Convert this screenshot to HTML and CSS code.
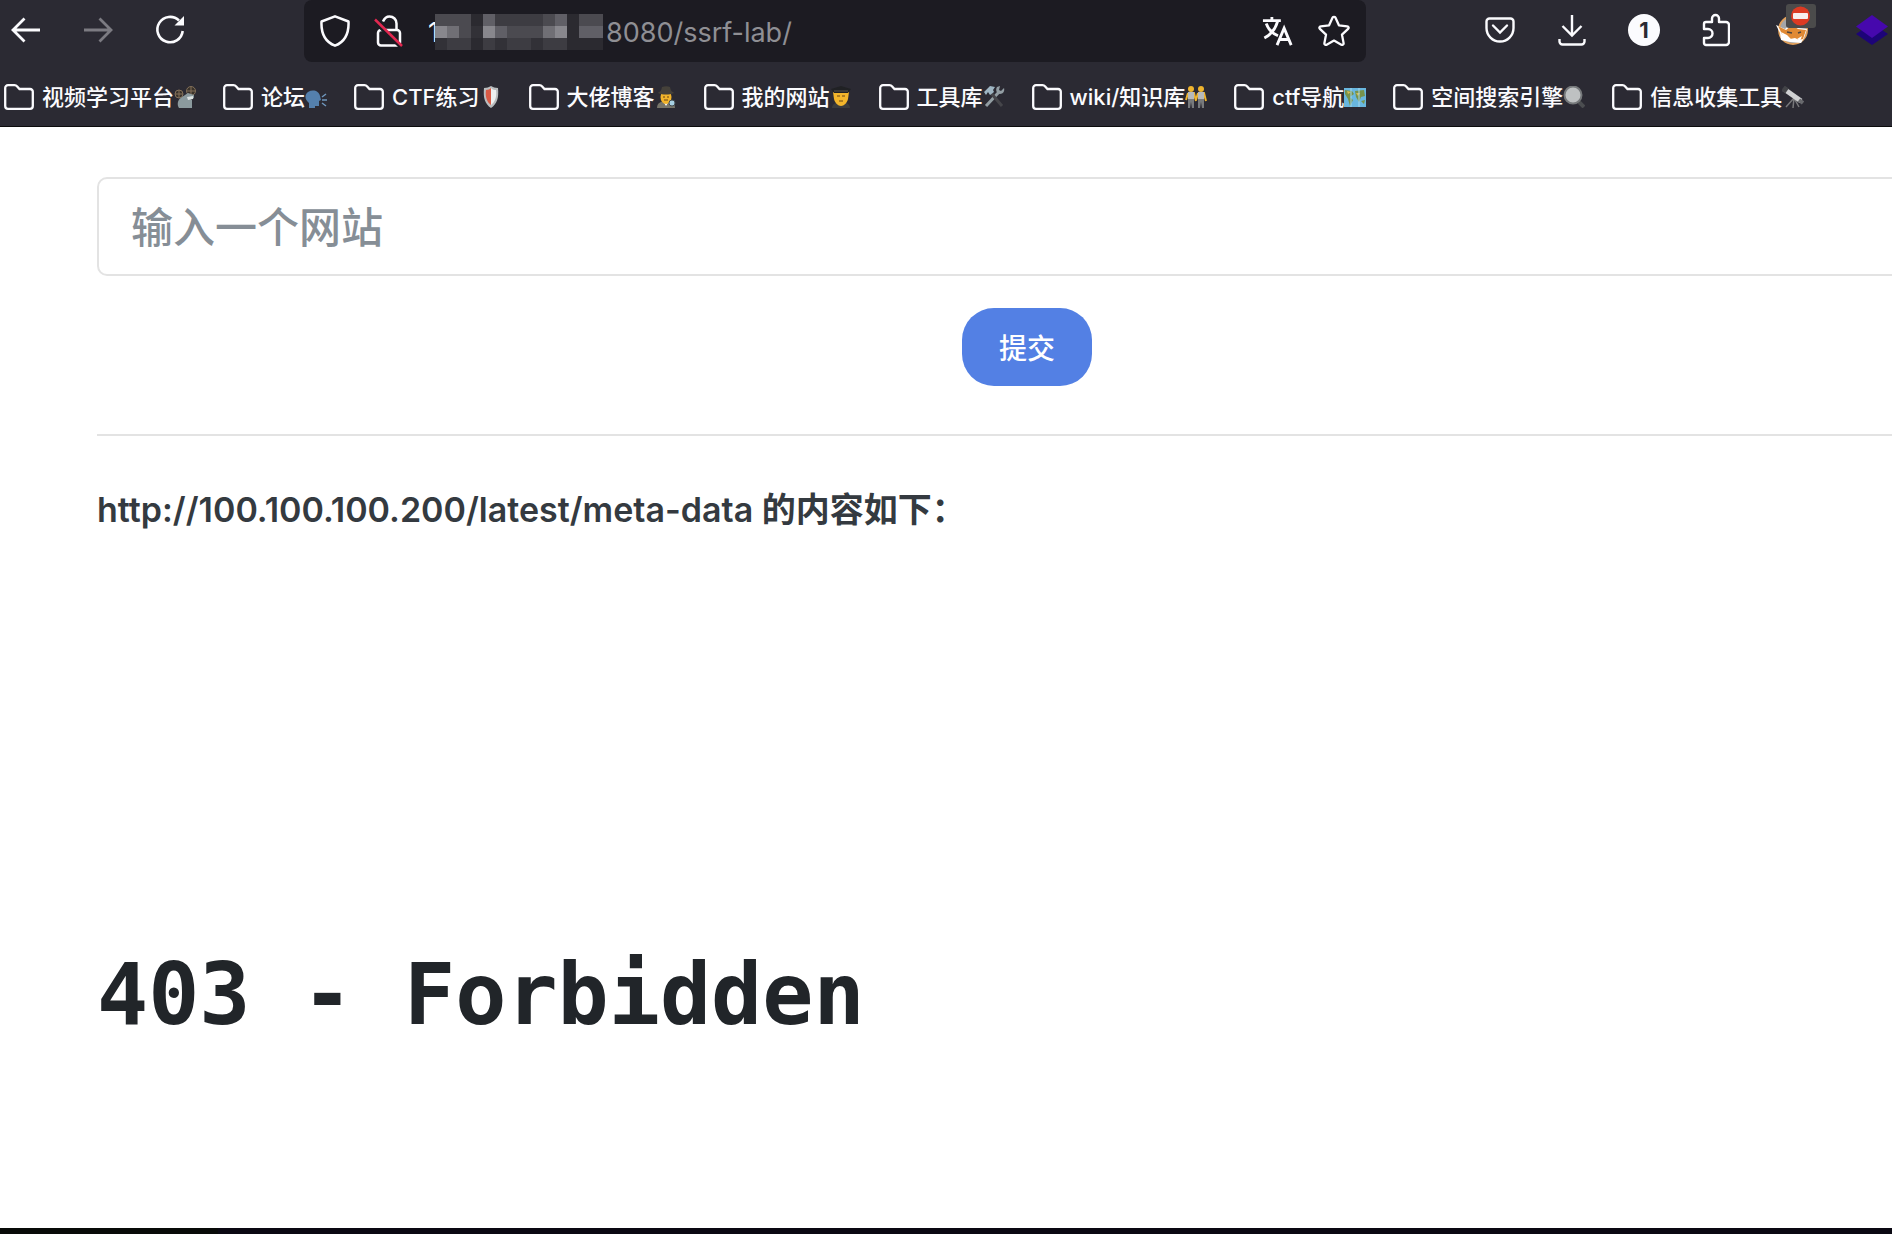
FILE: index.html
```html
<!DOCTYPE html>
<html lang="zh-CN">

<head>
    <meta charset="UTF-8">
    <meta name="viewport" content="width=device-width, initial-scale=1.0">
    <title>ssrf-lab</title>
    <link rel="stylesheet" href="styles.css">
</head>

<body>
    <svg width="0" height="0" class="defs" aria-hidden="true">
        <symbol id="folder" viewBox="0 0 30 26">
            <path d="M4 1.200h6.500c1.200 0 2 .4 2.700 1.200L15.500 5H26a2.800 2.800 0 0 1 2.800 3v14a2.800 2.800 0 0 1-2.800 2.800H4A2.800 2.800 0 0 1 1.200 22V4A2.800 2.800 0 0 1 4 1.200z" fill="none" stroke="#fbfbfe" stroke-width="2.300" />
        </symbol>
    </svg>

    <header>
        <nav class="toolbar">
            <div class="nav-buttons">
                <button aria-label="后退">
                    <svg width="32" height="32" viewBox="0 0 32 32"><path d="M30 16H3M14.500 4.500 3 16l11.500 11.500" fill="none" stroke="#fbfbfe" stroke-width="2.800" /></svg>
                </button>
                <button aria-label="前进">
                    <svg width="32" height="32" viewBox="0 0 32 32"><path d="M2 16h27M17.500 4.500 29 16 17.500 27.500" fill="none" stroke="#7c7b82" stroke-width="2.800" /></svg>
                </button>
                <button aria-label="刷新">
                    <svg width="32" height="32" viewBox="0 0 32 32"><path d="M28.700 17A12.700 12.700 0 1 1 25 6.500" fill="none" stroke="#fbfbfe" stroke-width="2.600" /><path d="M30 2v9.500h-9.500z" fill="#fbfbfe" /></svg>
                </button>
            </div>

            <div class="url-bar">
                <svg width="30" height="32" viewBox="0 0 30 32"><path d="M15 1.300 28.500 6.500C29 17 26 26.500 15 30.700 4 26.500 1 17 1.500 6.500z" fill="none" stroke="#fbfbfe" stroke-width="2.500" stroke-linejoin="round" /></svg>
                <svg width="30" height="32" viewBox="0 0 30 32">
                    <rect x="4" y="15" width="22" height="15.500" rx="3" fill="none" stroke="#fbfbfe" stroke-width="2.500" />
                    <path d="M9 6.500C10.500 3 12.500 1.500 15.500 1.500c4 0 7 3 7 7V15" fill="none" stroke="#fbfbfe" stroke-width="2.500" />
                    <path d="M.5 6.500 27 32" stroke="#1c1b22" stroke-width="4" />
                    <path d="M1 4.500 28 31" stroke="#e22850" stroke-width="2.500" />
                </svg>
                <div class="address">
                    <span class="host">1</span>
                    <svg class="mosaic" width="168" height="36" viewBox="0 0 14 3" preserveAspectRatio="none" shape-rendering="crispEdges">
                        <path fill="#3d3c42" d="M0 0h14v3H0z" />
                        <path fill="#4b4a50" d="M0 0h3v1H0zM2 1h1v1H2zM6 1h3v1H6zM9 0h1v1H9zM12 0h2v1h-2z" />
                        <path fill="#88878d" d="M0 1h1v1H0zM4 1h1v1H4zM10 1h1v1h-1z" />
                        <path fill="#706f75" d="M1 1h1v1H1zM9 1h1v1H9z" />
                        <path fill="#605f66" d="M4 0h1v1H4zM10 0h1v1h-1zM5 1h1v1H5zM12 1h2v1h-2z" />
                        <path fill="#2b2a30" d="M3 0h1v1H3zM11 0h1v3h-1zM12 2h2v1h-2zM3 2h1v1H3z" />
                        <path fill="#323137" d="M0 2h1v1H0zM3 1h1v1H3zM5 2h1v1H5zM8 2h1v1H8z" />
                    </svg>
                    <span class="path">8080/ssrf-lab/</span>
                </div>
                <svg width="32" height="32" viewBox="0 0 34 32">
                    <path d="M1 5h19M10.500 1v4M4.500 8C7 15 12 19 17 21M16.500 6C14 15 9 20 2.500 23.500" fill="none" stroke="#fbfbfe" stroke-width="3" />
                    <path d="m16 31 7.500-18L31 31M18.500 25h10" fill="none" stroke="#fbfbfe" stroke-width="3" />
                </svg>
                <svg width="32" height="32" viewBox="0 0 32 32"><path d="M14.600 2.600c.5-1.100 2.300-1.100 2.800 0l3.500 7.700 8.300 1c1.400.2 1.900 1.700.9 2.600l-6.100 5.800 1.600 8.400c.2 1.300-1.100 2.200-2.300 1.600L16 25.600l-7.300 4.100c-1.200.6-2.500-.3-2.300-1.600L8 19.700l-6.100-5.800c-1-.9-.5-2.400.9-2.600l8.300-1z" fill="none" stroke="#fbfbfe" stroke-width="2.300" stroke-linejoin="round" /></svg>
            </div>

            <div class="nav-buttons">
                <button aria-label="Pocket">
                    <svg width="30" height="28" viewBox="0 0 30 28"><path d="M4.500 2.500h21a3 3 0 0 1 3 3V12a13.500 13.500 0 0 1-27 0V5.500a3 3 0 0 1 3-3z" fill="none" stroke="#fbfbfe" stroke-width="2.400" /><path d="m8 9.500 7 7 7-7" fill="none" stroke="#fbfbfe" stroke-width="2.400" stroke-linecap="round" /></svg>
                </button>
                <button aria-label="下载">
                    <svg width="28" height="32" viewBox="0 0 28 32"><path d="M14 1v20M4.500 12l9.500 9.500 9.500-9.500M1.500 25v2.500a3 3 0 0 0 3 3h19a3 3 0 0 0 3-3V25" fill="none" stroke="#fbfbfe" stroke-width="2.400" /></svg>
                </button>
                <button aria-label="通知"><span class="count">1</span></button>
                <button aria-label="扩展">
                    <svg width="28" height="34" viewBox="0 0 28 34"><path d="M2 14v-3a2 2 0 0 1 2-2h6V5.500a3.500 3.500 0 0 1 7 0V9h7a3 3 0 0 1 3 3v17a3 3 0 0 1-3 3H4a2 2 0 0 1-2-2v-5h4a4.500 4.500 0 0 0 0-9H2z" fill="none" stroke="#fbfbfe" stroke-width="2.400" stroke-linejoin="round" /></svg>
                </button>
                <button class="proxy" aria-label="代理">
                    <svg width="32" height="32" viewBox="0 0 32 32">
                        <circle cx="17" cy="16" r="14" fill="#a3a5a8" stroke="#e0a05c" stroke-width="2" />
                        <path d="m0 11 9 4 6-5 7 4 9 1-3 9-3 5-11-1-9-2-1-7z" fill="#fff" />
                        <path d="m2 12 8 4 6-5 6 4 8 1-3 9-4 1-4-2-5 1-8-5z" fill="#e08a35" />
                        <path d="m5 18 6 3 6 6-8-2zM21 25l5-3-2 5z" fill="#fff" />
                        <path d="m11 18 5 1M22 19l3-1" stroke="#4a4440" stroke-width="1.500" />
                    </svg>
                    <svg class="badge" width="30" height="24" viewBox="0 0 30 24">
                        <rect width="30" height="24" rx="3" fill="#4b4b4b" />
                        <circle cx="14.500" cy="12" r="9.500" fill="#dc3a23" />
                        <rect x="7" y="9" width="15" height="6" rx="1" fill="#f7eeee" />
                    </svg>
                </button>
                <button class="last" aria-label="Wappalyzer">
                    <svg width="32" height="30" viewBox="0 0 32 30"><path d="m0 19 16-11 16 11-16 11z" fill="#1d0478" /><path d="M0 11.500 16 0l16 11.500L16 23z" fill="#4608ad" /></svg>
                </button>
            </div>
        </nav>

        <nav class="bookmarks">
            <a href="#">
                <svg width="30" height="26"><use href="#folder" /></svg>
                <span>视频学习平台</span>
                <svg class="emoji" viewBox="0 0 22 22">
                    <circle cx="5" cy="8" r="4" fill="#3a332b" stroke="#84715a" /><circle cx="17" cy="5" r="4.500" fill="#3a332b" stroke="#84715a" />
                    <path d="M1 8h8M5 4v8M13 5h8M17 1v8" stroke="#84715a" />
                    <path d="M14 7 8 11c-5 3-5 8-3 11h13v-8h-2l4-2v-3z" fill="#8b9a9e" /><path d="M13 11l6-1v3l-5 1z" fill="#dce2e2" />
                </svg>
            </a>
            <a href="#">
                <svg width="30" height="26"><use href="#folder" /></svg>
                <span>论坛</span>
                <svg class="emoji" viewBox="0 0 22 22">
                    <path d="M4 22v-5C0 14-1 9 3 6c5-3 11-1 12 4l1 4-2 1v5h-4v2z" fill="#5480ad" />
                    <path d="m17 11 4-3M17 14h5M17 17l4 3" stroke="#6f97bd" stroke-width="1.500" />
                </svg>
            </a>
            <a href="#">
                <svg width="30" height="26"><use href="#folder" /></svg>
                <span>CTF练习</span>
                <svg class="emoji" viewBox="0 0 22 22">
                    <path d="M4 2c3 0 5-1 7-2 2 1 4 2 7 2 1 10-1 16-7 20C5 18 3 12 4 2z" fill="#b9bcbe" />
                    <path d="M6 4c2 0 4-1 5-2v17C7 16 5 11 6 4z" fill="#d95a45" /><path d="M11 2c2 2 3 2 5 2 1 7-1 12-5 15z" fill="#eef0f0" />
                </svg>
            </a>
            <a href="#">
                <svg width="30" height="26"><use href="#folder" /></svg>
                <span>大佬博客</span>
                <svg class="emoji" viewBox="0 0 22 22">
                    <path d="M2 22c0-5 4-7 9-7s9 2 9 7z" fill="#77756a" /><path d="m8 15 3 5 3-5z" fill="#fff" />
                    <ellipse cx="11" cy="11" rx="5.500" ry="7" fill="#f3b52b" />
                    <path d="M8 11h2M12 11h2M9 14h4" stroke="#684517" /><path d="M3 7c2-2 3-1 4-6 3-1 6-1 8 0 1 5 2 4 4 6-5 2-11 2-16 0z" fill="#45413a" />
                    <circle cx="17" cy="17" r="3" fill="#a7d0e4" stroke="#454d52" />
                </svg>
            </a>
            <a href="#">
                <svg width="30" height="26"><use href="#folder" /></svg>
                <span>我的网站</span>
                <svg class="emoji" viewBox="0 0 22 22">
                    <path d="M2 22c0-4 4-6 9-6s9 2 9 6z" fill="#3b3c3e" />
                    <path d="M3 6h16l-1 7c-1 4-4 7-7 7s-6-3-7-7z" fill="#f3b52b" /><path d="M7 10h3M12 10h3M9 15h4" stroke="#684517" />
                    <path d="m1 3 10-3 10 3-3 4H4z" fill="#202124" /><path d="M4 5h14" stroke="#58554b" />
                </svg>
            </a>
            <a href="#">
                <svg width="30" height="26"><use href="#folder" /></svg>
                <span>工具库</span>
                <svg class="emoji" viewBox="0 0 22 22">
                    <path d="m3 20 13-14" stroke="#929da3" stroke-width="3" /><path d="M14 1c-2 3 0 7 3 7s5-3 4-6l-3 3-2-1 1-4z" fill="#929da3" />
                    <path d="m8 7 11 13" stroke="#45454a" stroke-width="3" /><path d="M1 6 7 0l5 1-2 3 1 2-4 3-2-3-2 3z" fill="#9eb5c3" />
                </svg>
            </a>
            <a href="#">
                <svg width="30" height="26"><use href="#folder" /></svg>
                <span>wiki/知识库</span>
                <svg class="emoji" viewBox="0 0 22 22">
                    <g id="person"><circle cx="6" cy="3" r="3" fill="#efb42e" /><path d="M3 7h6l2 8M3 7 1 14" fill="none" stroke="#efb42e" stroke-width="2" /><path d="M3 6h6v8H3z" fill="#b6b9bb" /><path d="M3 13h6v9H7l-1-6-1 6H3z" fill="#77797c" /></g>
                    <use href="#person" x="10" />
                </svg>
            </a>
            <a href="#">
                <svg width="30" height="26"><use href="#folder" /></svg>
                <span>ctf导航</span>
                <svg class="emoji" viewBox="0 0 22 22">
                    <path d="M0 2h22v19H0z" fill="#69b7df" /><path d="m1 4 7 1 2 3-4 3 3 3-3 6-2-7-3-5zM11 5l9-1 1 6-4 1-2 5-3-5zM17 15l4-1-1 4z" fill="#78934b" />
                    <path d="M12 7h4l-2 3zM3 5l4 1-3 2z" fill="#d4bd55" /><path d="M7 2v19M15 2v19" stroke="#a7d7ec" />
                </svg>
            </a>
            <a href="#">
                <svg width="30" height="26"><use href="#folder" /></svg>
                <span>空间搜索引擎</span>
                <svg class="emoji" viewBox="0 0 22 22">
                    <path d="m13 13 8 8" stroke="#4b4d50" stroke-width="4" /><circle cx="10" cy="9" r="8.500" fill="#bec1c2" stroke="#76797b" stroke-width="2" />
                </svg>
            </a>
            <a href="#">
                <svg width="30" height="26"><use href="#folder" /></svg>
                <span>信息收集工具</span>
                <svg class="emoji" viewBox="0 0 22 22">
                    <path d="m12 12-8 9M12 12l-1 10M12 12l5 9" stroke="#77777a" stroke-width="1.500" />
                    <path d="m2 3 17 12" stroke="#d0d1d3" stroke-width="5" /><path d="m1 2 4 3" stroke="#424347" stroke-width="6" /><path d="m17 14 4 3" stroke="#68696d" stroke-width="4" />
                </svg>
            </a>
        </nav>
    </header>

    <main>
        <form onsubmit="return false">
            <input type="text" aria-label="输入一个网站" placeholder="输入一个网站">
            <button class="submit-btn">提交</button>
        </form>
        <hr>
        <h4>http://100.100.100.200/latest/meta-data 的内容如下：</h4>
        <h1>403 - Forbidden</h1>
    </main>

    <footer></footer>
</body>

</html>
```
FILE: styles.css
```css
* {
    box-sizing: border-box;
}

body {
    margin: 0;
    min-height: 100vh;
    display: flex;
    flex-direction: column;
    overflow-x: hidden;
    font-family: Inter, "Noto Sans CJK SC", sans-serif;
    background-color: #fff;
}

button,
input {
    font-family: inherit;
}

svg {
    display: block;
    flex: none;
}

.defs {
    position: absolute;
}

/* Browser chrome */
header {
    background-color: #2b2a33;
    border-bottom: 1px solid #0c0c0d;
}

.toolbar {
    display: flex;
    gap: 108px;
    height: 62px;
}

.nav-buttons {
    display: flex;
    gap: 20px;
}

.nav-buttons button {
    position: relative;
    display: flex;
    align-items: center;
    justify-content: center;
    width: 52px;
    height: 60px;
    padding: 0;
    border: none;
    background: none;
    cursor: pointer;
}

.nav-buttons .proxy {
    padding-left: 8px;
}

.nav-buttons .last {
    justify-content: flex-end;
    width: 58px;
    padding-right: 4px;
}

.count {
    width: 32px;
    height: 32px;
    border-radius: 50%;
    background-color: #fbfbfe;
    color: #2b2a33;
    font-size: 22px;
    font-weight: 700;
    line-height: 32px;
}

.badge {
    position: absolute;
    top: 4px;
    right: -2px;
}

.url-bar {
    flex: 1;
    display: flex;
    align-items: center;
    gap: 24px;
    padding: 0 16px;
    border-radius: 8px;
    background-color: #1c1b22;
}

.address {
    flex: 1;
    display: flex;
    align-items: center;
    padding-top: 2px;
    font-size: 27px;
    color: #8f8f94;
}

.host {
    color: #fbfbfe;
}

.mosaic {
    margin: 0 3px 0 -4px;
}

.bookmarks {
    display: flex;
    gap: 27px;
    height: 64px;
    padding: 6px 0 0 4px;
    overflow: hidden;
}

.bookmarks a {
    display: flex;
    align-items: center;
    color: #fbfbfe;
    font-size: 22px;
    font-weight: 500;
    line-height: 32px;
    white-space: nowrap;
    text-decoration: none;
}

.bookmarks span {
    margin-left: 8px;
}

.emoji {
    width: 22px;
    height: 22px;
}

/* Page, wider than what is left of the window */
main {
    flex: 1;
    width: calc(100% - 32px);
    margin-left: 97px;
    padding-top: 50px;
}

form {
    display: flex;
    flex-direction: column;
    align-items: center;
    gap: 32px;
}

input {
    width: 100%;
    height: 99px;
    padding: 2px 32px 0;
    border: 2px solid #e3e3e3;
    border-radius: 10px;
    font-size: 42px;
    color: #343a40;
}

input::placeholder {
    color: #868e96;
    font-weight: 500;
    opacity: 1;
}

.submit-btn {
    width: 130px;
    height: 78px;
    border: none;
    border-radius: 32px;
    background-color: #5380e4;
    color: #fff;
    font-size: 28px;
    font-weight: 500;
    cursor: pointer;
}

hr {
    margin: 48px 0 0;
    border: none;
    border-top: 2px solid #e3e3e3;
}

h4 {
    margin: 52px 0 0;
    color: #343a40;
    font-size: 34px;
    font-weight: 600;
    line-height: 44px;
}

h1 {
    margin: 413px 0 0;
    color: #212529;
    font-family: "DejaVu Sans Mono", monospace;
    font-size: 85px;
    font-weight: 700;
    line-height: 100px;
}

footer {
    height: 6px;
    border-left: 218px solid #080a08;
    background-color: #0a0812;
}
```
